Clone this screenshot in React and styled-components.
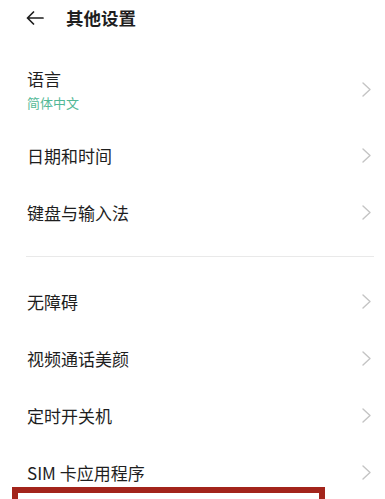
import React from 'react';
import styled, { createGlobalStyle } from 'styled-components';

const GlobalStyle = createGlobalStyle`
  html, body {
    margin: 0;
    padding: 0;
    background: #fff;
  }
  body {
    font-family: "Noto Sans CJK SC", "Noto Sans", sans-serif;
    color: #1e1e1e;
  }
`;

const Screen = styled.div`
  position: relative;
  width: 385px;
  height: 499px;
  overflow: hidden;
  background: #fff;
`;

const Header = styled.div`
  height: 36px;
  display: flex;
  align-items: center;
  padding-left: 26px;
  gap: 22px;
`;

const Title = styled.h1`
  margin: 0;
  font-size: 17.5px;
  font-weight: 700;
  line-height: 1;
  letter-spacing: 0;
`;

const Section = styled.div`
  margin-top: ${p => p.$top || 0}px;
`;

const Row = styled.div`
  height: ${p => p.$height || 57}px;
  display: flex;
  align-items: center;
  justify-content: space-between;
  padding: 0 14px 0 27px;
`;

const Texts = styled.div`
  display: flex;
  flex-direction: column;
`;

const Label = styled.span`
  font-size: 17px;
  line-height: 24px;
  color: #1e1e1e;
`;

const Sub = styled.span`
  font-size: 13px;
  line-height: 18px;
  margin-top: 3px;
  color: #52b896;
`;

const Divider = styled.div`
  height: 1px;
  background: #e9e9e9;
  margin: 15px 11px 16px 26px;
`;

const Highlight = styled.div`
  position: absolute;
  top: 487px;
  left: 12px;
  width: 313px;
  height: 40px;
  border: 6px solid #a3241b;
  box-sizing: border-box;
`;

const BackArrow = () => (
  <svg width="18" height="14" viewBox="0 0 18 14" fill="none">
    <path d="M17 7H1.5M7.5 1L1.5 7l6 6" stroke="#1e1e1e" strokeWidth="1.7" strokeLinecap="round" strokeLinejoin="round" />
  </svg>
);

const Chevron = () => (
  <svg width="9" height="15" viewBox="0 0 9 15" fill="none">
    <path d="M1 1l7 6.5L1 14" stroke="#c4c4c4" strokeWidth="1.4" strokeLinecap="round" strokeLinejoin="round" />
  </svg>
);

const Item = ({ label, sub, height }) => (
  <Row $height={height}>
    <Texts>
      <Label>{label}</Label>
      {sub && <Sub>{sub}</Sub>}
    </Texts>
    <Chevron />
  </Row>
);

export default function App() {
  return (
    <Screen>
      <GlobalStyle />
      <Header>
        <BackArrow />
        <Title>其他设置</Title>
      </Header>
      <Section $top={16}>
        <Item label="语言" sub="简体中文" height={75} />
        <Item label="日期和时间" />
        <Item label="键盘与输入法" />
      </Section>
      <Divider />
      <Section>
        <Item label="无障碍" />
        <Item label="视频通话美颜" />
        <Item label="定时开关机" />
        <Item label="SIM 卡应用程序" />
      </Section>
      <Highlight />
    </Screen>
  );
}
